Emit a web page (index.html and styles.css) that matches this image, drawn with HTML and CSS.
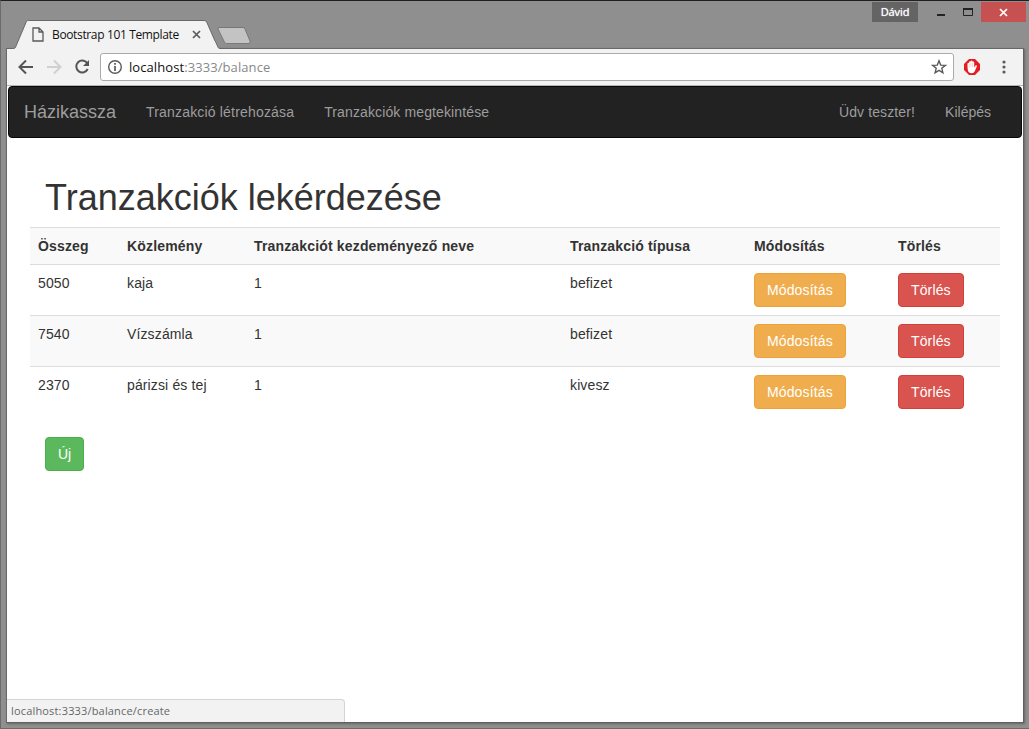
FILE: index.html
```html
<!DOCTYPE html>
<html lang="hu">
<head>
<meta charset="utf-8">
<title>Bootstrap 101 Template</title>
<link rel="stylesheet" href="styles.css">
</head>
<body>
<div class="window">
  <header class="titlebar">
    <div class="tab">
      <svg class="tab-shape" width="208" height="30" viewBox="0 0 208 30"><path d="M0 30 V28.5 H6.5 Q8 28.5 8.6 27 L19.3 1.7 Q19.8 .5 21.5 .5 H197 Q199 .5 199.7 2 L208 21 V30z" fill="#f2f2f2"/><path d="M0 28.5 H6.5 Q8 28.5 8.6 27 L19.3 1.7 Q19.8 .5 21.5 .5 H197 Q199 .5 199.7 2 L208 21" fill="none" stroke="#686868"/></svg>
      <div class="tab-body">
        <svg class="page-icon" width="12" height="15" viewBox="0 0 12 15"><path d="M1 1H7L11 5V14H1z M7 1V5H11" fill="none" stroke="#5a5a5a" stroke-width="1.3"/></svg>
        <span class="tab-title">Bootstrap 101 Template</span>
        <svg class="tab-close" width="9" height="9" viewBox="0 0 9 9"><path d="M1 1L8 8M8 1L1 8" stroke="#5a5a5a" stroke-width="1.7"/></svg>
      </div>
    </div>
    <svg class="newtab" width="45" height="30" viewBox="0 0 45 30"><path d="M0 20.5 L3.2 27.5 Q3.6 28.5 5 28.5 V30 H0z" fill="#f2f2f2"/><path d="M0 20.5 L3.2 27.5 Q3.6 28.5 5 28.5" fill="none" stroke="#686868"/><path d="M4 7.5 H28 Q29.5 7.5 30 9 L35 21 Q35.5 23.5 34 23.5 H11.5 Q10 23.5 9.5 22.3 L3 9 Q2.5 7.5 4 7.5z" fill="#c3c3c3" stroke="#787878"/></svg>
    <div class="controls">
      <span class="user">Dávid</span>
      <svg class="winicons" width="63" height="21" viewBox="0 0 63 21"><path d="M19 13h8" stroke="#222" stroke-width="2"/><path d="M45.5 7.5h9v6h-9z" fill="none" stroke="#222"/><path d="M45 7h10" stroke="#222" stroke-width="2"/></svg>
      <span class="winclose"><svg width="9" height="9" viewBox="0 0 9 9"><path d="M1 1L8 8M8 1L1 8" stroke="#fff" stroke-width="1.7"/></svg></span>
    </div>
  </header>
  <div class="client">
    <div class="toolbar">
      <svg class="nav-icons" width="92" height="36" viewBox="0 0 92 36"><g fill="none" stroke-width="2"><path d="M26 18H13M19 11.5L12.5 18L19 24.5" stroke="#555"/><path d="M40 18H53M47 11.5L53.5 18L47 24.5" stroke="#d0d0d0"/><path d="M80.2 14A6 6 0 1 0 80.7 20" stroke="#555"/></g><path d="M82 11V17H76z" fill="#555"/></svg>
      <div class="address">
        <svg width="16" height="16" viewBox="0 0 16 16"><circle cx="8" cy="8" r="6.3" fill="none" stroke="#5a5a5a" stroke-width="1.4"/><path d="M8 7V12M8 4V5.7" stroke="#5a5a5a" stroke-width="1.7"/></svg>
        <span class="url"><b>localhost</b>:3333/balance</span>
        <svg class="star" width="16" height="16" viewBox="0 0 16 16"><path d="M8 1.8L9.7 6.1L14.3 6.4L10.8 9.3L11.9 13.8L8 11.4L4.1 13.8L5.2 9.3L1.7 6.4L6.3 6.1z" fill="none" stroke="#5a5a5a" stroke-width="1.4"/></svg>
      </div>
      <svg class="stop" width="16" height="16" viewBox="0 0 16 16"><path d="M5 0H11L16 5V11L11 16H5L0 11V5z" fill="#e51b20"/><path d="M3.5 8V4.5Q4.3 3.4 5.1 4.2V2.8Q5.9 1.8 6.8 2.6V2Q7.6 1.2 8.5 2V2.8Q9.4 2 10.2 3V8.5L11.5 6.5Q12.6 5.8 13 7L10.9 12Q9.8 14.3 8 14.3Q4.3 14.3 3.8 11z" fill="#fff"/><path d="M5.2 5V8M6.9 4V8M8.6 4V8" stroke="#ddb5b5" stroke-width=".5"/></svg>
      <svg class="more" width="4" height="14" viewBox="0 0 4 14"><g fill="#5a5a5a"><circle cx="2" cy="2" r="1.6"/><circle cx="2" cy="7" r="1.6"/><circle cx="2" cy="12" r="1.6"/></g></svg>
    </div>
    <main class="page">
      <nav class="navbar">
        <a class="brand">Házikassza</a>
        <a class="nav-link wide">Tranzakció létrehozása</a>
        <a class="nav-link">Tranzakciók megtekintése</a>
        <a class="nav-link nav-right">Üdv teszter!</a>
        <a class="nav-link last">Kilépés</a>
      </nav>
      <div class="container">
        <h1>Tranzakciók lekérdezése</h1>
        <table class="table">
          <colgroup><col class="c1"><col class="c2"><col class="c3"><col class="c4"><col class="c5"><col class="c6"></colgroup>
          <tr><th>Összeg</th><th>Közlemény</th><th>Tranzakciót kezdeményező neve</th><th>Tranzakció típusa</th><th>Módosítás</th><th>Törlés</th></tr>
          <tr><td>5050</td><td>kaja</td><td>1</td><td>befizet</td><td><a class="btn warning">Módosítás</a></td><td><a class="btn danger">Törlés</a></td></tr>
          <tr><td>7540</td><td>Vízszámla</td><td>1</td><td>befizet</td><td><a class="btn warning">Módosítás</a></td><td><a class="btn danger">Törlés</a></td></tr>
          <tr><td>2370</td><td>párizsi és tej</td><td>1</td><td>kivesz</td><td><a class="btn warning">Módosítás</a></td><td><a class="btn danger">Törlés</a></td></tr>
        </table>
        <a class="btn success">Új</a>
      </div>
      <div class="status"><span>localhost:3333/balance/create</span></div>
    </main>
  </div>
</div>
</body>
</html>
```
FILE: styles.css
```css
* { box-sizing: border-box; }
body { margin: 0; font: 14px/20px "Liberation Sans", Arial, sans-serif; color: #333; }
svg { display: block; flex: none; }
.window { width: 1029px; height: 729px; overflow: hidden; background: #8f8f8f; border: 1px solid #6b6b6b; border-top-color: #231f20; border-right: 0; padding: 0 5px; }
.titlebar { height: 47px; display: flex; align-items: flex-start; margin-right: -2px; }
.tab { display: grid; width: 208px; height: 30px; margin: 19px 0 0 1px; position: relative; z-index: 1; }
.tab-shape, .tab-body { grid-area: 1 / 1; }
.tab-body { display: flex; align-items: center; padding: 0 0 1px 25px; font: 12px/16px "Open Sans", "Noto Sans", sans-serif; color: #111; }
.tab-title { width: 134px; margin-left: 8px; letter-spacing: -.36px; white-space: nowrap; }
.tab-close { margin-left: 6px; }
.newtab { margin-top: 19px; position: relative; z-index: 1; }
.controls { margin-left: auto; display: flex; padding-top: 1px; }
.user { width: 46px; height: 20px; background: #646464; color: #fff; text-align: center; font: 11px/20px "Open Sans", sans-serif; letter-spacing: -.1px; text-shadow: 0 0 1px #fff; }
.winclose { width: 45px; height: 20px; background: #c75050; display: flex; align-items: center; justify-content: center; }
.client { height: 675px; border: 1px solid #606060; border-left-color: #686868; border-top-color: #686868; background: #fff; box-shadow: 1px 1px 2px #666; }
.toolbar { height: 37px; background: #f2f2f2; border-bottom: 1px solid #b4b4b4; display: flex; align-items: center; }
.address { width: 854px; height: 28px; margin-left: 1px; border: 1px solid #aaa; border-radius: 3px; background: #fff; display: flex; align-items: center; padding: 0 6px; }
.url { margin-left: 6px; font: 13px/20px "Open Sans", "Noto Sans", sans-serif; color: #888; letter-spacing: .08px; }
.url b { font-weight: 400; color: #111; }
.star { margin-left: auto; }
.stop { margin-left: 10px; }
.more { margin-left: 22px; }
.page { height: 636px; padding: 0 0 0 1px; display: flex; flex-direction: column; }
.navbar { width: 1014px; height: 52px; flex: none; background: #222; border: 1px solid #080808; border-radius: 4px; color: #9d9d9d; display: flex; align-items: center; padding: 0 15px; }
.brand { font-size: 18px; padding-right: 15px; width: 107px; }
.nav-link { padding: 0 15px; white-space: nowrap; letter-spacing: .12px; }
.wide { letter-spacing: .18px; }
.last { letter-spacing: 0; }
.nav-right { margin-left: auto; }
.container { width: 970px; margin-left: 22px; padding-top: 40px; }
h1 { margin: 0 0 9px 15px; font-size: 36px; line-height: 40px; font-weight: 500; }
.table { width: 970px; table-layout: fixed; border-collapse: collapse; margin-bottom: 20px; }
.c1 { width: 89px; } .c2 { width: 127px; } .c3 { width: 316px; } .c4 { width: 184px; } .c5 { width: 144px; } .c6 { width: 110px; }
th, td { padding: 8px; text-align: left; vertical-align: top; border-top: 1px solid #ddd; white-space: nowrap; letter-spacing: .13px; }
th { letter-spacing: .16px; }
tr:nth-child(odd) { background: #f9f9f9; }
.btn { display: inline-block; padding: 6px 12px; border: 1px solid; border-radius: 4px; color: #fff; vertical-align: middle; }
.warning { background: #f0ad4e; border-color: #eea236; }
.danger { background: #d9534f; border-color: #d43f3a; }
.success { background: #5cb85c; border-color: #4cae4c; margin-left: 15px; }
.status { width: 338px; height: 23px; margin: auto 0 0 -1px; background: #f2f2f2; border: 1px solid #d4d4d4; border-width: 1px 1px 0 0; border-radius: 0 4px 0 0; padding-left: 4px; font: 11px/22px "Open Sans", "Noto Sans", sans-serif; color: #666; letter-spacing: .17px; }
```
